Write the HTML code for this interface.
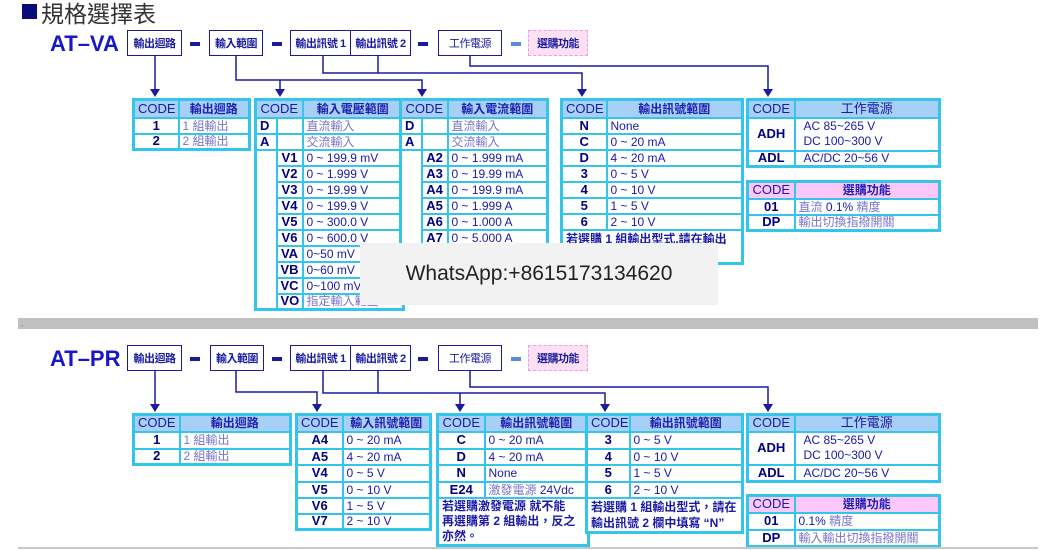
<!DOCTYPE html>
<html><head><meta charset="utf-8">
<style>
*{margin:0;padding:0;box-sizing:border-box}
body{width:1057px;height:550px;background:#fff;position:relative;overflow:hidden;font-family:"Liberation Sans","Noto Sans CJK TC",sans-serif}
.a{position:absolute}
.bx{position:absolute;border:1.5px solid #1a1a9a;color:#1a1aa0;font-size:11px;font-weight:bold;display:flex;align-items:center;justify-content:center;white-space:nowrap;letter-spacing:-0.5px}
.pk{border:1.5px dashed #f0a0d8;background:#fde0f4}
.ds{position:absolute;height:4px;width:10px;background:#1a1a9a}
table{position:absolute;border-collapse:collapse;table-layout:fixed;border:3px solid #33c6ea}
td{border:2px solid #33c6ea;font-size:12px;line-height:12px;padding:0 3px;white-space:nowrap;overflow:hidden;color:#1a1aa8;background:#fff}
td.h{background:#a8cff5;color:#2020b0;font-weight:bold;text-align:center}
td.h2{background:#a8cff5;color:#1a1aa0;font-size:13px;text-align:center}
td.p{background:#fcc8fc;color:#2020b0;font-weight:bold;text-align:center}
td.pc{background:#fcc8fc;color:#1a1aa0;font-size:13px;text-align:center}
td.c{color:#000080;font-weight:bold;text-align:center;font-size:13px}
td.cl{color:#000080;font-weight:bold;font-size:13px}
td.z{color:#7a74c8}
td.n{color:#1a1aa8;font-weight:bold;font-size:12px;line-height:16px}
</style></head><body>
<div class="a" style="left:22px;top:4px;width:15px;height:15px;background:#0a0a78"></div>
<div class="a" style="left:41px;top:-1px;font-size:23px;line-height:26px;color:#333;font-family:'Noto Sans CJK TC',sans-serif">規格選擇表</div>

<div class="a" style="left:50px;top:31px;font-size:22px;font-weight:bold;color:#1818c8">AT–VA</div>
<div class="bx" style="left:127px;top:30px;width:55px;height:26px">輸出迴路</div>
<div class="ds" style="left:190px;top:42px"></div>
<div class="bx" style="left:209px;top:30px;width:54px;height:26px">輸入範圍</div>
<div class="ds" style="left:272px;top:42px"></div>
<div class="bx" style="left:290px;top:30px;width:61px;height:26px">輸出訊號 1</div>
<div class="bx" style="left:350px;top:30px;width:61px;height:26px">輸出訊號 2</div>
<div class="ds" style="left:418px;top:42px"></div>
<div class="bx" style="left:438px;top:30px;width:64px;height:26px;font-weight:normal">工作電源</div>
<div class="ds" style="left:511px;top:42px;background:#5a8ae0"></div>
<div class="bx pk" style="left:528px;top:30px;width:60px;height:26px">選購功能</div>

<div class="a" style="left:50px;top:346px;font-size:22px;font-weight:bold;color:#1818c8">AT–PR</div>
<div class="bx" style="left:127px;top:345px;width:55px;height:26px">輸出迴路</div>
<div class="ds" style="left:190px;top:357px"></div>
<div class="bx" style="left:210px;top:345px;width:54px;height:26px">輸入範圍</div>
<div class="ds" style="left:272px;top:357px"></div>
<div class="bx" style="left:290px;top:345px;width:61px;height:26px">輸出訊號 1</div>
<div class="bx" style="left:350px;top:345px;width:61px;height:26px">輸出訊號 2</div>
<div class="ds" style="left:418px;top:357px"></div>
<div class="bx" style="left:438px;top:345px;width:64px;height:26px;font-weight:normal">工作電源</div>
<div class="ds" style="left:511px;top:357px;background:#5a8ae0"></div>
<div class="bx pk" style="left:528px;top:345px;width:60px;height:26px">選購功能</div>

<svg class="a" style="left:0;top:0" width="1057" height="550" stroke="#1a1aa0" stroke-width="1.5" fill="none">
<path d="M155 56V90M236 56V80H422V90M280 80V90M323 56V73H582V90M378 56V73M470 56V66H768V90"/>
<path d="M155 371V405M236 371V392H317V405M323 371V393H605V405M460 393V405M378 371V393M470 371V387H768V405"/>
<g fill="#1a1aa0" stroke="none">
<path d="M150 89h10l-5 8zM275 89h10l-5 8zM417 89h10l-5 8zM577 89h10l-5 8zM763 89h10l-5 8z"/>
<path d="M150 404h10l-5 8zM312 404h10l-5 8zM455 404h10l-5 8zM600 404h10l-5 8zM763 404h10l-5 8z"/>
</g>
</svg>

<table style="left:132px;top:98px;width:116px">
<col style="width:45px"><col style="width:71px">
<tr style="height:18px"><td class="h2">CODE</td><td class="h">輸出迴路</td></tr>
<tr style="height:16px"><td class="c">1</td><td class="z">1 組輸出</td></tr>
<tr style="height:16px"><td class="c">2</td><td class="z">2 組輸出</td></tr>
</table>

<table style="left:254px;top:98px;width:148px">
<col style="width:21px"><col style="width:26px"><col style="width:101px">
<tr style="height:18px"><td class="h2" colspan="2">CODE</td><td class="h">輸入電壓範圍</td></tr>
<tr style="height:16px"><td class="cl">D</td><td></td><td class="z">直流輸入</td></tr>
<tr style="height:16px"><td class="cl">A</td><td></td><td class="z">交流輸入</td></tr>
<tr style="height:16px"><td rowspan="10"></td><td class="c">V1</td><td>0 ~ 199.9 mV</td></tr>
<tr style="height:16px"><td class="c">V2</td><td>0 ~ 1.999 V</td></tr>
<tr style="height:16px"><td class="c">V3</td><td>0 ~ 19.99 V</td></tr>
<tr style="height:16px"><td class="c">V4</td><td>0 ~ 199.9 V</td></tr>
<tr style="height:16px"><td class="c">V5</td><td>0 ~ 300.0 V</td></tr>
<tr style="height:16px"><td class="c">V6</td><td>0 ~ 600.0 V</td></tr>
<tr style="height:16px"><td class="c">VA</td><td>0~50 mV</td></tr>
<tr style="height:16px"><td class="c">VB</td><td>0~60 mV</td></tr>
<tr style="height:16px"><td class="c">VC</td><td>0~100 mV</td></tr>
<tr style="height:16px"><td class="c">VO</td><td class="z">指定輸入範圍</td></tr>
</table>

<table style="left:399px;top:98px;width:147px">
<col style="width:21px"><col style="width:26px"><col style="width:100px">
<tr style="height:18px"><td class="h2" colspan="2">CODE</td><td class="h">輸入電流範圍</td></tr>
<tr style="height:16px"><td class="cl">D</td><td></td><td class="z">直流輸入</td></tr>
<tr style="height:16px"><td class="cl">A</td><td></td><td class="z">交流輸入</td></tr>
<tr style="height:16px"><td rowspan="7"></td><td class="c">A2</td><td>0 ~ 1.999 mA</td></tr>
<tr style="height:16px"><td class="c">A3</td><td>0 ~ 19.99 mA</td></tr>
<tr style="height:16px"><td class="c">A4</td><td>0 ~ 199.9 mA</td></tr>
<tr style="height:16px"><td class="c">A5</td><td>0 ~ 1.999 A</td></tr>
<tr style="height:16px"><td class="c">A6</td><td>0 ~ 1.000 A</td></tr>
<tr style="height:16px"><td class="c">A7</td><td>0 ~ 5.000 A</td></tr>
<tr style="height:16px"><td class="c"></td><td></td></tr>
</table>

<table style="left:560px;top:98px;width:181px">
<col style="width:45px"><col style="width:136px">
<tr style="height:18px"><td class="h2">CODE</td><td class="h">輸出訊號範圍</td></tr>
<tr style="height:16px"><td class="c">N</td><td>None</td></tr>
<tr style="height:16px"><td class="c">C</td><td>0 ~ 20 mA</td></tr>
<tr style="height:16px"><td class="c">D</td><td>4 ~ 20 mA</td></tr>
<tr style="height:16px"><td class="c">3</td><td>0 ~ 5 V</td></tr>
<tr style="height:16px"><td class="c">4</td><td>0 ~ 10 V</td></tr>
<tr style="height:16px"><td class="c">5</td><td>1 ~ 5 V</td></tr>
<tr style="height:16px"><td class="c">6</td><td>2 ~ 10 V</td></tr>
<tr style="height:34px"><td colspan="2" class="n" style="vertical-align:top">若選購 1 組輸出型式,請在輸出</td></tr>
</table>

<table style="left:746px;top:98px;width:192px">
<col style="width:47px"><col style="width:145px">
<tr style="height:18px"><td class="h2">CODE</td><td class="h" style="font-weight:normal;color:#1a1aa0;font-size:13px">工作電源</td></tr>
<tr style="height:33px"><td class="c">ADH</td><td style="line-height:15px;padding-left:8px">AC 85~265 V<br>DC 100~300 V</td></tr>
<tr style="height:16px"><td class="c">ADL</td><td style="padding-left:8px">AC/DC 20~56 V</td></tr>
</table>

<table style="left:746px;top:180px;width:192px">
<col style="width:47px"><col style="width:145px">
<tr style="height:17px"><td class="pc">CODE</td><td class="p">選購功能</td></tr>
<tr style="height:16px"><td class="c">01</td><td><span style="color:#7a74c8">直流</span> 0.1% <span style="color:#7a74c8">精度</span></td></tr>
<tr style="height:16px"><td class="c">DP</td><td class="z">輸出切換指撥開關</td></tr>
</table>

<div class="a" style="left:360px;top:243px;width:358px;height:62px;background:#f2f2f2;font-size:21px;color:#222;display:flex;align-items:center;justify-content:center">WhatsApp:+8615173134620</div>

<div class="a" style="left:18px;top:318px;width:1020px;height:11px;background:#c0c0c0"></div>
<div class="a" style="left:21px;top:319px;font-size:8px;color:#555">.</div>

<table style="left:132px;top:413px;width:157px">
<col style="width:46px"><col style="width:111px">
<tr style="height:17px"><td class="h2">CODE</td><td class="h">輸出迴路</td></tr>
<tr style="height:17px"><td class="c">1</td><td class="z">1 組輸出</td></tr>
<tr style="height:16px"><td class="c">2</td><td class="z">2 組輸出</td></tr>
</table>

<table style="left:295px;top:413px;width:134px">
<col style="width:46px"><col style="width:88px">
<tr style="height:17px"><td class="h2">CODE</td><td class="h">輸入訊號範圍</td></tr>
<tr style="height:17px"><td class="c">A4</td><td>0 ~ 20 mA</td></tr>
<tr style="height:16px"><td class="c">A5</td><td>4 ~ 20 mA</td></tr>
<tr style="height:17px"><td class="c">V4</td><td>0 ~ 5 V</td></tr>
<tr style="height:16px"><td class="c">V5</td><td>0 ~ 10 V</td></tr>
<tr style="height:16px"><td class="c">V6</td><td>1 ~ 5 V</td></tr>
<tr style="height:16px"><td class="c">V7</td><td>2 ~ 10 V</td></tr>
</table>

<table style="left:436px;top:413px;width:151px">
<col style="width:47px"><col style="width:104px">
<tr style="height:17px"><td class="h2">CODE</td><td class="h">輸出訊號範圍</td></tr>
<tr style="height:17px"><td class="c">C</td><td>0 ~ 20 mA</td></tr>
<tr style="height:16px"><td class="c">D</td><td>4 ~ 20 mA</td></tr>
<tr style="height:17px"><td class="c">N</td><td>None</td></tr>
<tr style="height:16px"><td class="c">E24</td><td><span style="color:#7a74c8">激發電源</span> 24Vdc</td></tr>
<tr style="height:48px"><td colspan="2" class="n" style="vertical-align:top;line-height:15px">若選購激發電源 就不能<br>再選購第 2 組輸出，反之<br>亦然。</td></tr>
</table>

<table style="left:585px;top:413px;width:156px">
<col style="width:43px"><col style="width:113px">
<tr style="height:17px"><td class="h2">CODE</td><td class="h">輸出訊號範圍</td></tr>
<tr style="height:17px"><td class="c">3</td><td>0 ~ 5 V</td></tr>
<tr style="height:16px"><td class="c">4</td><td>0 ~ 10 V</td></tr>
<tr style="height:17px"><td class="c">5</td><td>1 ~ 5 V</td></tr>
<tr style="height:16px"><td class="c">6</td><td>2 ~ 10 V</td></tr>
<tr style="height:33px"><td colspan="2" class="n" style="vertical-align:top">若選購 1 組輸出型式，請在<br>輸出訊號 2 欄中填寫 “N”</td></tr>
</table>

<table style="left:746px;top:413px;width:192px">
<col style="width:47px"><col style="width:145px">
<tr style="height:17px"><td class="h2">CODE</td><td class="h" style="font-weight:normal;color:#1a1aa0;font-size:13px">工作電源</td></tr>
<tr style="height:33px"><td class="c">ADH</td><td style="line-height:15px;padding-left:8px">AC 85~265 V<br>DC 100~300 V</td></tr>
<tr style="height:17px"><td class="c">ADL</td><td style="padding-left:8px">AC/DC 20~56 V</td></tr>
</table>

<table style="left:746px;top:494px;width:192px">
<col style="width:47px"><col style="width:145px">
<tr style="height:17px"><td class="pc">CODE</td><td class="p">選購功能</td></tr>
<tr style="height:17px"><td class="c">01</td><td>0.1% <span style="color:#7a74c8">精度</span></td></tr>
<tr style="height:17px"><td class="c">DP</td><td class="z">輸入輸出切換指撥開關</td></tr>
</table>

<div class="a" style="left:18px;top:547px;width:1020px;height:2px;background:#c8c8c8"></div>
</body></html>
